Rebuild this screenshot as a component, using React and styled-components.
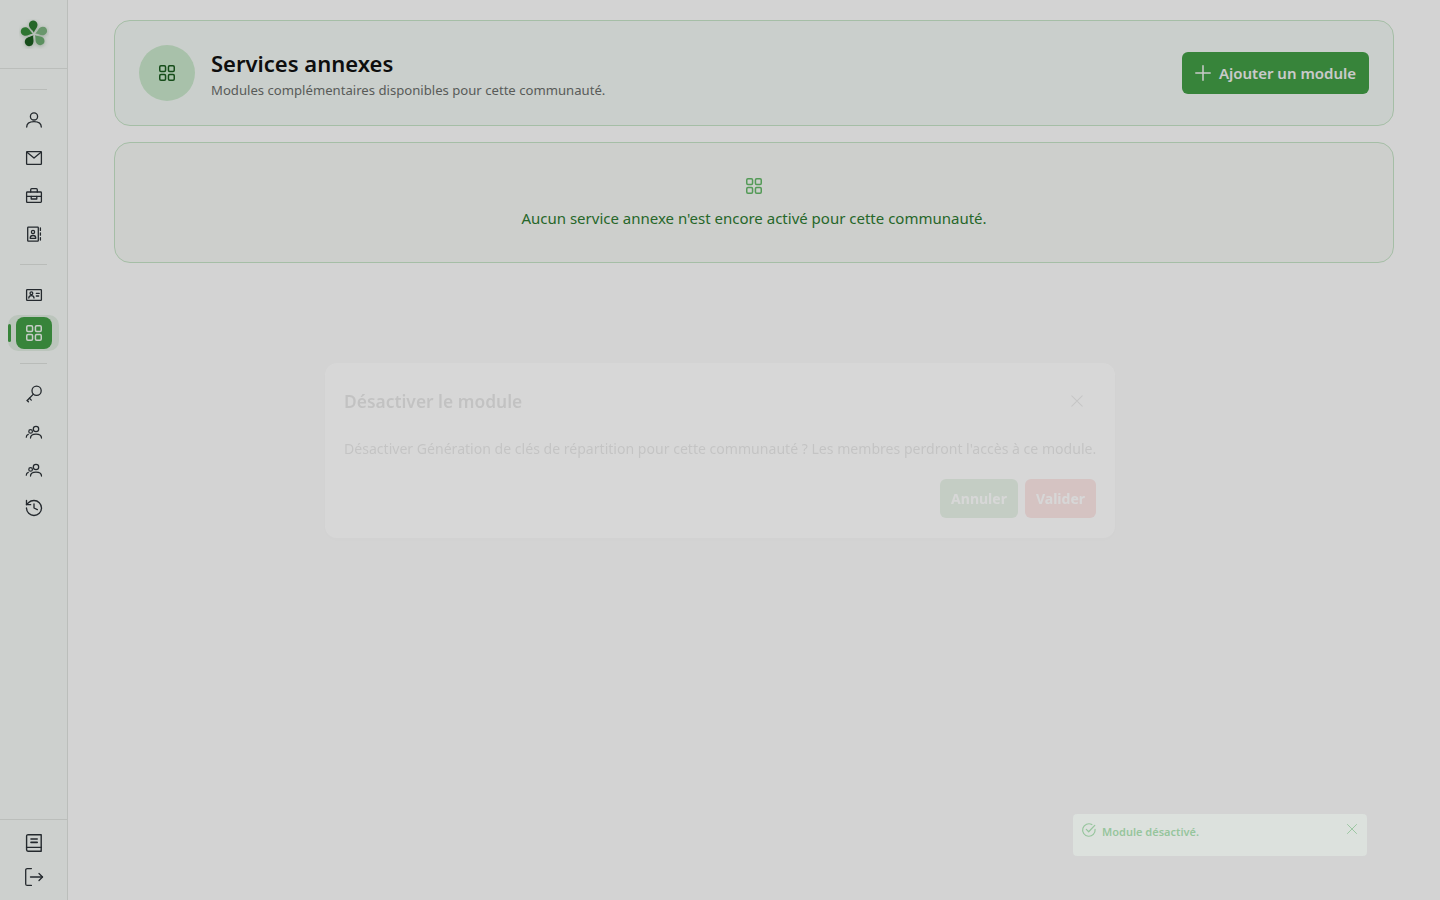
import React from "react";
import styled, { createGlobalStyle } from "styled-components";

const GlobalStyle = createGlobalStyle`
  * { box-sizing: border-box; }
  html, body { margin: 0; height: 100%; }
  body {
    background: #ffffff;
    font-family: "Noto Sans", "Liberation Sans", sans-serif;
    color: #111;
  }
`;

const Shell = styled.div`
  display: flex;
  height: 900px;
  overflow: hidden;
`;

const Sidebar = styled.aside`
  width: 68px;
  flex: none;
  display: flex;
  flex-direction: column;
  background: #f8fcf9;
  border-right: 1px solid #e2e6e2;
`;

const LogoBox = styled.div`
  height: 69px;
  flex: none;
  display: flex;
  align-items: center;
  justify-content: center;
  border-bottom: 1px solid #e2e6e2;
`;

const Nav = styled.nav`
  flex: 1;
  display: flex;
  flex-direction: column;
  align-items: stretch;
  padding-top: 19px;
`;

const Divider = styled.div`
  height: 1px;
  width: 27px;
  margin: 0 auto;
  margin-top: ${(p) => p.$top || 11}px;
  margin-bottom: 11px;
  background: #e0e4e0;
`;

const NavItem = styled.div`
  height: ${(p) => p.$h || 38}px;
  display: flex;
  align-items: center;
  justify-content: center;
  color: #2c3238;
`;

const ActiveWrap = styled.div`
  position: relative;
  height: 36px;
  margin: 1px 8px;
  display: flex;
  align-items: center;
  justify-content: center;
  border-radius: 10px;
  background: #e3efe4;
`;

const ActiveBar = styled.span`
  position: absolute;
  left: 0;
  top: 9px;
  width: 3px;
  height: 18px;
  border-radius: 2px;
  background: #43a047;
`;

const ActiveTile = styled.div`
  width: 36px;
  height: 32px;
  border-radius: 8px;
  display: flex;
  align-items: center;
  justify-content: center;
  background: #43a047;
  color: #f1f8f1;
`;

const Foot = styled.div`
  flex: none;
  height: 81px;
  padding-top: 6px;
  border-top: 1px solid #e2e6e2;
`;

const Main = styled.main`
  flex: 1;
  display: flex;
  flex-direction: column;
  gap: 16px;
  padding: 20px 46px 0;
`;

const HeadCard = styled.section`
  height: 106px;
  display: flex;
  align-items: center;
  gap: 16px;
  padding: 0 24px;
  border: 1px solid #c8e6c9;
  border-radius: 16px;
  background: #f5fbf7;
`;

const Disc = styled.div`
  width: 56px;
  height: 56px;
  flex: none;
  border-radius: 50%;
  display: flex;
  align-items: center;
  justify-content: center;
  background: #cceace;
  color: #1b5e20;
`;

const TitleBlock = styled.div`
  flex: 1;
  min-width: 0;
  padding-top: 1px;
`;

const Title = styled.h1`
  margin: 0 0 1px;
  font-size: 22px;
  line-height: 32px;
  font-weight: 600;
  color: #121212;
`;

const Subtitle = styled.p`
  margin: 0;
  font-size: 13.13px;
  line-height: 20px;
  color: #6b6f6c;
`;

const AddButton = styled.button`
  height: 42px;
  width: 187px;
  flex: none;
  display: flex;
  align-items: center;
  justify-content: center;
  gap: 8px;
  border: 0;
  border-radius: 6px;
  background: #43a047;
  color: #f5f5f5;
  font: 600 15px "Noto Sans", sans-serif;
`;

const EmptyCard = styled.section`
  height: 121px;
  display: flex;
  flex-direction: column;
  align-items: center;
  padding-top: 33px;
  gap: 11px;
  border: 1px solid #c8e6c9;
  border-radius: 16px;
  background: #f8faf7;
  color: #66bb6a;
`;

const EmptyText = styled.p`
  margin: 0;
  font-size: 15px;
  line-height: 22px;
  color: #2e7d32;
`;

const Overlay = styled.div`
  position: fixed;
  inset: 0;
  background: rgba(0, 0, 0, 0.173);
`;

const Modal = styled.div`
  position: fixed;
  left: 325px;
  top: 363px;
  width: 790px;
  height: 175px;
  padding: 24px 19px 20px;
  border-radius: 12px;
  background: #fff;
  box-shadow: 0 2px 10px rgba(0, 0, 0, 0.12);
  opacity: 0.1;
`;

const ModalHead = styled.div`
  display: flex;
  align-items: center;
  justify-content: space-between;
  height: 28px;
  padding-right: 11px;
  color: #555;
`;

const ModalTitle = styled.h2`
  margin: 0;
  font-size: 17.4px;
  line-height: 28px;
  font-weight: 600;
  color: #333;
`;

const ModalText = styled.p`
  margin: 22px 0 0;
  font-size: 14.07px;
  line-height: 24px;
  white-space: nowrap;
  color: #444;
`;

const ModalActions = styled.div`
  display: flex;
  justify-content: flex-end;
  gap: 7px;
  margin-top: 18px;
`;

const ModalButton = styled.button`
  height: 39px;
  width: ${(p) => p.$w}px;
  border: 0;
  border-radius: 6px;
  background: ${(p) => p.$bg};
  color: #fff;
  font: 700 14px "Noto Sans", sans-serif;
`;

const Toast = styled.div`
  position: fixed;
  left: 1073px;
  top: 814px;
  width: 294px;
  height: 42px;
  display: flex;
  align-items: flex-start;
  padding: 8px 8px 0;
  border-radius: 4px;
  background: #e6f2e9;
  opacity: 0.45;
  color: #4cb35a;
`;

const ToastText = styled.span`
  flex: 1;
  margin-left: 5px;
  padding-top: 1px;
  font-size: 11px;
  line-height: 18px;
  font-weight: 600;
`;

const Glyph = ({ size = 20, width = 1.3, view = 20, children }) => (
  <svg
    width={size}
    height={size}
    viewBox={`0 0 ${view} ${view}`}
    fill="none"
    stroke="currentColor"
    strokeWidth={width}
    strokeLinecap="round"
    strokeLinejoin="round"
  >
    {children}
  </svg>
);

const GridIcon = ({ size }) => (
  <Glyph size={size} width={1.5}>
    <rect x="2.75" y="2.75" width="5.8" height="5.8" rx="1.2" />
    <rect x="11.45" y="2.75" width="5.8" height="5.8" rx="1.2" />
    <rect x="2.75" y="11.45" width="5.8" height="5.8" rx="1.2" />
    <rect x="11.45" y="11.45" width="5.8" height="5.8" rx="1.2" />
  </Glyph>
);

const UserIcon = () => (
  <Glyph>
    <circle cx="10" cy="6.4" r="3.6" />
    <path d="M2.700 17c0-3.400 3-5.400 7.300-5.400s7.300 2 7.300 5.400" />
  </Glyph>
);

const MailIcon = () => (
  <Glyph>
    <rect x="2.600" y="3.600" width="14.800" height="12.800" rx="0.6" />
    <path d="M3 4.200l7 5.800 7-5.800" />
  </Glyph>
);

const CaseIcon = () => (
  <Glyph>
    <rect x="2.600" y="6" width="14.800" height="10.400" rx="0.8" />
    <path d="M6.700 6V3.700a1 1 0 0 1 1-1h4.600a1 1 0 0 1 1 1V6" />
    <path d="M2.600 10.300h14.800" />
    <path d="M7.200 10.300v2.700h5.600v-2.700" />
  </Glyph>
);

const ContactsIcon = () => (
  <Glyph>
    <rect x="3.700" y="3.200" width="10.600" height="14" rx="0.6" />
    <circle cx="9" cy="8" r="1.600" />
    <path d="M6.200 14.300c0-1.900 1.200-2.800 2.800-2.800s2.800.9 2.800 2.800z" />
    <path d="M16.400 4v2.400M16.400 8.800v2.400M16.400 13.600v2.400" />
  </Glyph>
);

const IdIcon = () => (
  <Glyph>
    <rect x="2.600" y="4.600" width="14.800" height="10.800" rx="0.6" />
    <circle cx="7.400" cy="8.300" r="1.400" />
    <path d="M4.800 13c0-1.600 1.100-2.400 2.600-2.400s2.600.8 2.600 2.400" />
    <path d="M12.300 8.300h3M12.300 11h2.400" />
  </Glyph>
);

const KeyIcon = () => (
  <Glyph>
    <circle cx="12.600" cy="6.800" r="4.600" />
    <path d="M9.400 10.100L3.200 16.500" />
    <path d="M5.400 14.200l1.900 1.900M3.200 16.500l1.200 1.200" />
  </Glyph>
);

const UsersIcon = () => (
  <Glyph width={1.25}>
    <circle cx="12" cy="7" r="2.700" />
    <path d="M6.500 16c0-2.600 2.100-4 5.500-4s5.500 1.400 5.500 4" />
    <circle cx="6.600" cy="9.400" r="1.800" />
    <path d="M2.300 15.200c0-1.500.7-2.500 2-2.900" />
  </Glyph>
);

const HistoryIcon = () => (
  <Glyph view={24} width={1.6}>
    <path d="M3 12a9 9 0 1 0 9-9 9.750 9.750 0 0 0-6.740 2.740L3 8" />
    <path d="M3 3v5h5" />
    <path d="M12 7v5l4 2" />
  </Glyph>
);

const BookIcon = () => (
  <Glyph width={1.4}>
    <path d="M4.200 1.700h13v16.600H4a1.500 1.500 0 0 1-1.400-1.500V3.200a1.500 1.500 0 0 1 1.600-1.500z" />
    <path d="M2.600 14.400h14.600" />
    <path d="M7 6h6.200M7 9.400h6.200" strokeWidth="1.600" />
  </Glyph>
);

const LogoutIcon = () => (
  <Glyph>
    <path d="M7.400 1.600H3.200a1.500 1.500 0 0 0-1.500 1.500v13.800a1.500 1.500 0 0 0 1.500 1.500h4.200" />
    <path d="M6.500 10h12" />
    <path d="M15 6.500l3.500 3.500-3.500 3.500" />
  </Glyph>
);

const PlusIcon = () => (
  <Glyph size={16} width={1.9}>
    <path d="M10 1v18M1 10h18" />
  </Glyph>
);

const CloseIcon = ({ size = 16 }) => (
  <Glyph size={size}>
    <path d="M3.500 3.500l13 13M16.500 3.500l-13 13" />
  </Glyph>
);

const CheckIcon = () => (
  <Glyph size={16} width={1.5}>
    <path d="M17.600 9.200a7.800 7.800 0 1 1-4-6" />
    <path d="M6.600 9.200l3 3 7.600-8" />
  </Glyph>
);

const PETALS = [
  { angle: -5, fill: "#2e7d32" },
  { angle: 71, fill: "#81b784" },
  { angle: 138, fill: "#6fae73" },
  { angle: 212, fill: "#1b5e20" },
  { angle: 286, fill: "#388e3c" },
];

const Logo = () => (
  <svg width="30" height="30" viewBox="0 0 30 30">
    <g
      transform="translate(15 15)"
      style={{ filter: "drop-shadow(0 1px 2px rgba(40,90,40,.3))" }}
    >
      {PETALS.map((p) => (
        <path
          key={p.angle}
          transform={`rotate(${p.angle})`}
          d="M0 -1.200C-.8 -4 -4.300 -5.800 -4.300 -9.300A4.300 4.300 0 0 1 4.300 -9.300C4.300 -5.800 .8 -4 0 -1.200z"
          fill={p.fill}
        />
      ))}
    </g>
  </svg>
);

export default function App() {
  return (
    <>
      <GlobalStyle />
      <Shell>
        <Sidebar>
          <LogoBox>
            <Logo />
          </LogoBox>
          <Nav>
            <Divider $top={1} />
            <NavItem><UserIcon /></NavItem>
            <NavItem><MailIcon /></NavItem>
            <NavItem><CaseIcon /></NavItem>
            <NavItem><ContactsIcon /></NavItem>
            <Divider />
            <NavItem><IdIcon /></NavItem>
            <ActiveWrap>
              <ActiveBar />
              <ActiveTile><GridIcon /></ActiveTile>
            </ActiveWrap>
            <Divider />
            <NavItem><KeyIcon /></NavItem>
            <NavItem><UsersIcon /></NavItem>
            <NavItem><UsersIcon /></NavItem>
            <NavItem><HistoryIcon /></NavItem>
          </Nav>
          <Foot>
            <NavItem $h={34}><BookIcon /></NavItem>
            <NavItem $h={34}><LogoutIcon /></NavItem>
          </Foot>
        </Sidebar>
        <Main>
          <HeadCard>
            <Disc><GridIcon /></Disc>
            <TitleBlock>
              <Title>Services annexes</Title>
              <Subtitle>Modules complémentaires disponibles pour cette communauté.</Subtitle>
            </TitleBlock>
            <AddButton><PlusIcon />Ajouter un module</AddButton>
          </HeadCard>
          <EmptyCard>
            <GridIcon />
            <EmptyText>Aucun service annexe n'est encore activé pour cette communauté.</EmptyText>
          </EmptyCard>
        </Main>
      </Shell>
      <Overlay />
      <Modal>
        <ModalHead>
          <ModalTitle>Désactiver le module</ModalTitle>
          <CloseIcon />
        </ModalHead>
        <ModalText>Désactiver Génération de clés de répartition pour cette communauté ? Les membres perdront l'accès à ce module.</ModalText>
        <ModalActions>
          <ModalButton $w={78} $bg="#43a047">Annuler</ModalButton>
          <ModalButton $w={71} $bg="#e53935">Valider</ModalButton>
        </ModalActions>
      </Modal>
      <Toast>
        <CheckIcon />
        <ToastText>Module désactivé.</ToastText>
        <CloseIcon size={14} />
      </Toast>
    </>
  );
}
